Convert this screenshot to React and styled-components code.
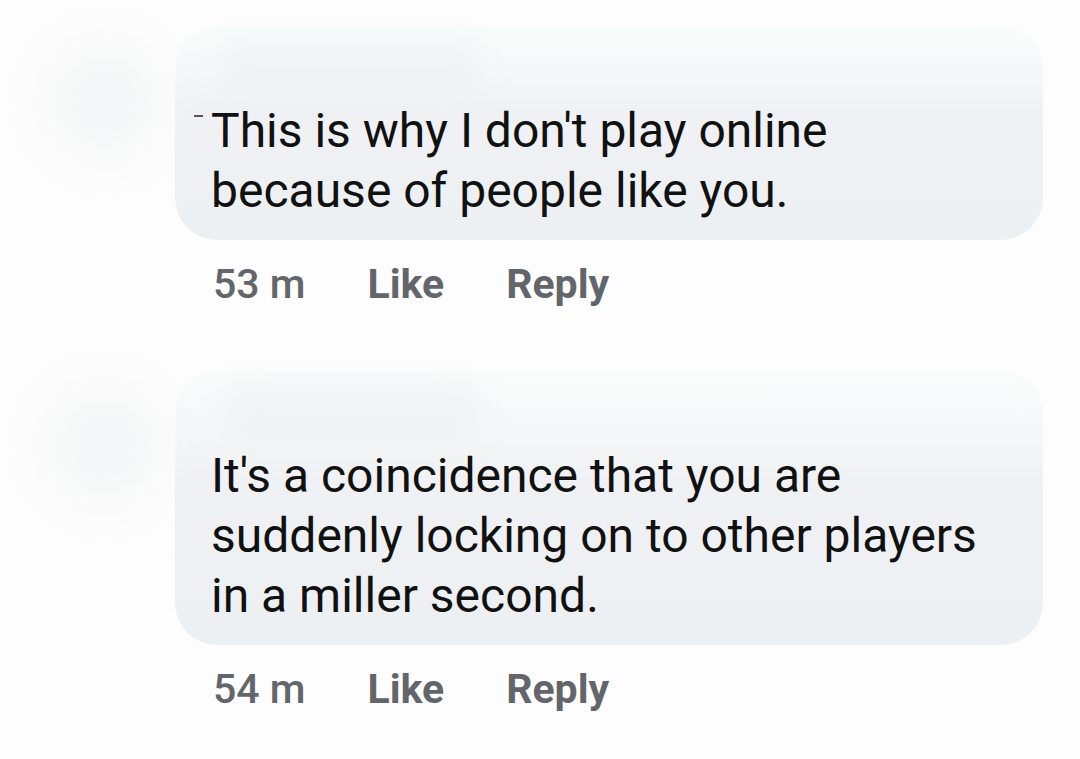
import styled, { createGlobalStyle } from "styled-components";

const GlobalStyle = createGlobalStyle`
  html, body {
    margin: 0;
    padding: 0;
    background: #fdfdfd;
  }
  body {
    font-family: Roboto, "Liberation Sans", sans-serif;
    -webkit-font-smoothing: antialiased;
  }
`;

const comments = [
  {
    id: 1,
    text: "This is why I don't play online because of people like you.",
    time: "53 m",
    width: 700,
    dash: true,
  },
  {
    id: 2,
    text: "It's a coincidence that you are suddenly locking on to other players in a miller second.",
    time: "54 m",
    width: 790,
  },
];

export default function App() {
  return (
    <>
      <GlobalStyle />
      <Page>
        {comments.map((c) => (
          <Comment key={c.id}>
            <AvatarCol>
              <AvatarSmudge />
            </AvatarCol>
            <Body>
              <Bubble>
                <NameSmudge />
                <Text $width={c.width}>
                  {c.dash && <Dash />}
                  {c.text}
                </Text>
              </Bubble>
              <Meta>
                <Time>{c.time}</Time>
                <Action>Like</Action>
                <Action>Reply</Action>
              </Meta>
            </Body>
          </Comment>
        ))}
      </Page>
    </>
  );
}

const Page = styled.div`
  display: flex;
  flex-direction: column;
  gap: 65px;
  padding-top: 26px;
  width: 1080px;
  height: 759px;
  box-sizing: border-box;
  overflow: hidden;
`;

const Comment = styled.div`
  display: flex;
`;

const AvatarCol = styled.div`
  width: 175px;
  flex-shrink: 0;
`;

const AvatarSmudge = styled.div`
  margin: 20px 0 0 50px;
  width: 110px;
  height: 110px;
  border-radius: 50%;
  background: #f4f5f6;
  filter: blur(26px);
`;

const Body = styled.div`
  display: flex;
  flex-direction: column;
`;

const Bubble = styled.div`
  width: 868px;
  box-sizing: border-box;
  padding: 0 36px 19px 36px;
  border-radius: 42px;
  background: linear-gradient(
    180deg,
    #fafbfb 0%,
    #f6f7f8 22%,
    #eff1f4 40%,
    #edf0f3 100%
  );
`;

const NameSmudge = styled.div`
  height: 62px;
  margin: 13px 0 0 10px;
  width: 260px;
  border-radius: 20px;
  background: #eceef0;
  opacity: 0.5;
  filter: blur(14px);
`;

const Text = styled.p`
  position: relative;
  margin: 0;
  width: ${(p) => p.$width}px;
  font-size: 48px;
  line-height: 60px;
  color: #111;
  font-weight: 400;
`;

const Dash = styled.span`
  position: absolute;
  left: -17px;
  top: 14px;
  width: 9px;
  height: 2px;
  background: #333;
  opacity: 0.8;
`;

const Meta = styled.div`
  display: flex;
  align-items: baseline;
  gap: 62px;
  padding: 22px 0 0 38px;
  font-size: 41px;
  line-height: 44px;
  color: #62666b;
`;

const Time = styled.span`
  font-weight: 500;
`;

const Action = styled.span`
  font-weight: 700;
`;
